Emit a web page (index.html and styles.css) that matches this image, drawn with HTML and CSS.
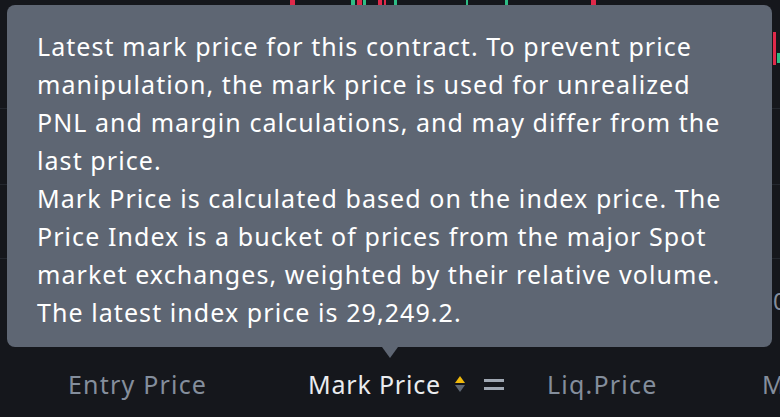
FILE: index.html
```html
<!DOCTYPE html>
<html>
<head>
<meta charset="utf-8">
<link rel="stylesheet" href="styles.css">
</head>
<body>
<div class="page">
  <div class="chart">
    <span class="candle red" style="left:290px;top:0;height:12px;width:5px"></span>
    <span class="candle green" style="left:351px;top:0;height:14px;width:4px"></span>
    <span class="candle red" style="left:357px;top:0;height:12px;width:5px"></span>
    <span class="candle green" style="left:363px;top:0;height:14px;width:3px"></span>
    <span class="candle red" style="left:378px;top:0;height:8px;width:4px"></span>
    <span class="candle red" style="left:384px;top:0;height:10px;width:2px"></span>
    <span class="candle green" style="left:394px;top:0;height:14px;width:3px"></span>
    <span class="candle green" style="left:466px;top:0;height:12px;width:2px"></span>
    <span class="candle green" style="left:505px;top:0;height:12px;width:3px"></span>
    <span class="candle red" style="left:591px;top:0;height:12px;width:5px"></span>
    <span class="candle red" style="left:773px;top:32px;height:33px;width:3px"></span>
    <span class="candle green" style="left:777px;top:53px;height:10px;width:3px"></span>
    <span class="gridline" style="top:108px"></span>
    <span class="gridline" style="top:184px"></span>
    <span class="gridline" style="top:258px"></span>
    <span class="axis-label">0</span>
  </div>
  <div class="header">
    <div class="cell">Entry Price</div>
    <div class="cell active">
      <span>Mark Price</span>
      <span class="sort"><span class="up"></span><span class="down"></span></span>
      <span class="eq"><span></span><span></span></span>
    </div>
    <div class="cell">Liq.Price</div>
    <div class="cell">M</div>
  </div>
  <div class="tooltip">
    <p>Latest mark price for this contract. To prevent price<br>manipulation, the mark price is used for unrealized<br>PNL and margin calculations, and may differ from the<br>last price.</p>
    <p>Mark Price is calculated based on the index price. The<br>Price Index is a bucket of prices from the major Spot<br>market exchanges, weighted by their relative volume.<br>The latest index price is 29,249.2.</p>
    <span class="arrow"></span>
  </div>
</div>
</body>
</html>
```
FILE: styles.css
```css
html, body {
  margin: 0;
  padding: 0;
  background: #15171c;
}
.page {
  position: relative;
  width: 780px;
  height: 417px;
  overflow: hidden;
  background: #15171c;
  font-family: "Noto Sans", "Open Sans", sans-serif;
}
.chart {
  position: relative;
  height: 360px;
}
.candle {
  position: absolute;
}
.red { background: #e0294a; }
.green { background: #2ebd85; }
.gridline {
  position: absolute;
  left: 0;
  right: 0;
  height: 1px;
  background: #23272e;
}
.axis-label {
  position: absolute;
  left: 773px;
  top: 284px;
  font-size: 24px;
  color: #848e9c;
}
.header {
  display: grid;
  grid-template-columns: 240px 239px 215px 1fr;
  padding-left: 68px;
  height: 48px;
  align-items: center;
  font-size: 25px;
  letter-spacing: 1.2px;
  color: #848e9c;
}
.cell {
  display: flex;
  align-items: center;
  white-space: nowrap;
  line-height: 1;
}
.cell.active {
  color: #eaecef;
  letter-spacing: 0.8px;
}
.sort {
  display: flex;
  flex-direction: column;
  gap: 2px;
  margin-left: 14px;
}
.sort .up {
  width: 0;
  height: 0;
  border-left: 5px solid transparent;
  border-right: 5px solid transparent;
  border-bottom: 7px solid #f0b90b;
}
.sort .down {
  width: 0;
  height: 0;
  border-left: 5px solid transparent;
  border-right: 5px solid transparent;
  border-top: 7px solid #5e6673;
}
.eq {
  display: flex;
  flex-direction: column;
  gap: 5px;
  margin-left: 19px;
}
.eq span {
  width: 20px;
  height: 3px;
  background: #a0a8b3;
}
.tooltip {
  position: absolute;
  left: 7px;
  top: 5px;
  width: 765px;
  height: 342px;
  box-sizing: border-box;
  padding: 22px 0 0 30px;
  background: #5e6673;
  border-radius: 8px;
  color: #ffffff;
  font-size: 25px;
  letter-spacing: 1.07px;
  line-height: 38px;
  white-space: nowrap;
}
.tooltip p {
  margin: 0;
}
.arrow {
  position: absolute;
  left: 375px;
  bottom: -11px;
  width: 0;
  height: 0;
  border-left: 8px solid transparent;
  border-right: 8px solid transparent;
  border-top: 11px solid #5e6673;
}
```
